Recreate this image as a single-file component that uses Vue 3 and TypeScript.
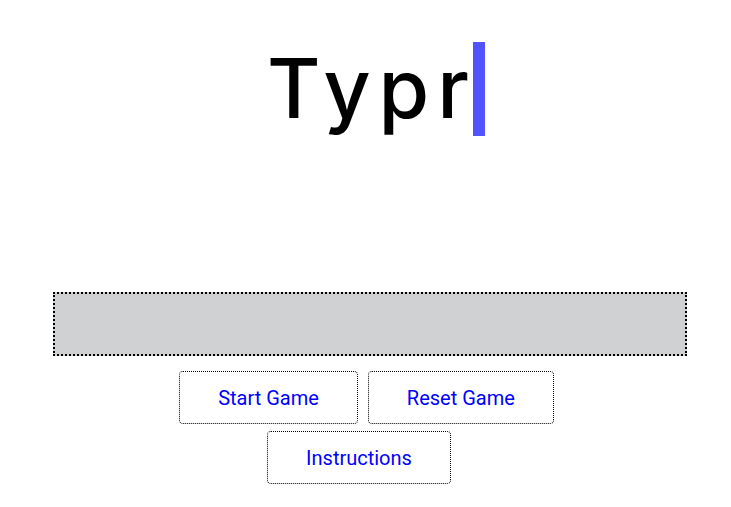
<script setup lang="ts">
import { ref } from 'vue'

const typed = ref('')
const playing = ref(false)
const showHelp = ref(false)

function startGame(): void {
  playing.value = true
}

function resetGame(): void {
  playing.value = false
  typed.value = ''
}
</script>

<template>
  <main class="game">
    <h1 class="title"><span class="word">Typr</span><span class="cursor"></span></h1>
    <input v-model="typed" class="entry" type="text" aria-label="Type here" :disabled="!playing" />
    <div class="actions">
      <div class="row">
        <button type="button" class="action" @click="startGame">Start Game</button>
        <button type="button" class="action" @click="resetGame">Reset Game</button>
      </div>
      <div class="row">
        <button type="button" class="action" @click="showHelp = !showHelp">Instructions</button>
      </div>
    </div>
    <p v-if="showHelp" class="help">Type each word before the time runs out.</p>
  </main>
</template>

<style>
body {
  background: #fff;
}
</style>

<style scoped>
.game {
  display: flex;
  flex-direction: column;
  padding: 42px 44px 20px 53px;
  font-family: Inter, "Liberation Sans", sans-serif;
}

.title {
  display: flex;
  justify-content: center;
  margin: 0 0 156px;
  padding-left: 12px;
  font-size: 82px;
  font-weight: 500;
  line-height: 94px;
  letter-spacing: 8px;
  color: #000;
}

.cursor {
  width: 12px;
  margin-left: -4px;
  background: #5252ff;
}

.entry {
  box-sizing: border-box;
  width: 100%;
  height: 64px;
  margin: 0 0 15px;
  padding: 0 16px;
  border: 2px dotted #000;
  border-radius: 0;
  background: #d0d1d3;
  font: inherit;
  font-size: 20px;
}

.actions {
  display: flex;
  flex-direction: column;
  gap: 7px;
}

.row {
  display: flex;
  justify-content: center;
  gap: 10px;
  padding-right: 7px;
}

.row + .row {
  padding-right: 22px;
}

.action {
  padding: 14px 38px 12px;
  border: 1px dotted #000;
  border-radius: 4px;
  background: #fff;
  color: #00f;
  font-family: Roboto, Inter, sans-serif;
  font-size: 20px;
  line-height: 25px;
  cursor: pointer;
}

.help {
  text-align: center;
}
</style>
